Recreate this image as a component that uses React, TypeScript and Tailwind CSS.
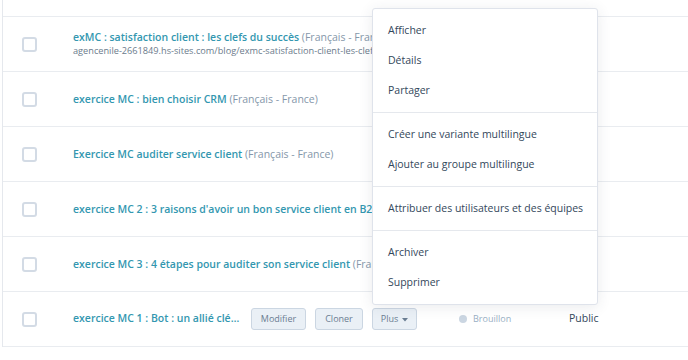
interface IRow {
  title: string;
  lang?: string;
  url?: string;
}

const rows: IRow[] = [
  {
    title: "exMC : satisfaction client : les clefs du succès",
    lang: "(Français - France)",
    url: "agencenile-2661849.hs-sites.com/blog/exmc-satisfaction-client-les-clefs-du-succes",
  },
  { title: "exercice MC : bien choisir CRM", lang: "(Français - France)" },
  { title: "Exercice MC auditer service client", lang: "(Français - France)" },
  { title: "exercice MC 2 : 3 raisons d'avoir un bon service client en B2B", lang: "(Français - France)" },
  { title: "exercice MC 3 : 4 étapes pour auditer son service client", lang: "(Français - France)" },
];

const menuSections = [
  ["Afficher", "Détails", "Partager"],
  ["Créer une variante multilingue", "Ajouter au groupe multilingue"],
  ["Attribuer des utilisateurs et des équipes"],
  ["Archiver", "Supprimer"],
];

const Checkbox = () => (
  <div className="w-[70px] shrink-0 pl-[19px]">
    <div className="w-[15px] h-[15px] border-2 border-[#d3dbe5] rounded-[3px] bg-white" />
  </div>
);

const MoreMenu = () => (
  <div className="absolute left-0 bottom-[calc(100%+3px)] z-10 w-[226px] bg-white border border-[#dfe3eb] rounded-[3px] shadow-[0_2px_14px_rgba(45,62,80,0.1)]">
    {menuSections.map((section, i) => (
      <div key={i} className={`pt-[7px] pb-[6px] ${i > 0 ? "border-t border-[#e5e8ed]" : ""}`}>
        {section.map((item) => (
          <div key={item} className="h-[30px] flex items-center px-[15px] text-[10.5px] text-[#33475b] whitespace-nowrap">
            {item}
          </div>
        ))}
      </div>
    ))}
  </div>
);

const Button = ({ label, width, caret }: { label: string; width: string; caret?: boolean }) => (
  <div className={`${width} h-[22px] flex items-center justify-center gap-[4px] bg-[#eaf0f6] border border-[#cbd6e2] rounded-[3px] text-[9px] text-[#6a7d92]`}>
    {label}
    {caret && (
      <svg width="6" height="4" viewBox="0 0 6 4" className="mt-[1px]">
        <path d="M0 0 L6 0 L3 3.5 Z" fill="#6a7d92" />
      </svg>
    )}
  </div>
);

export default function App() {
  return (
    <div
      className="w-[688px] h-[360px] overflow-hidden bg-white"
      style={{ fontFamily: "'Open Sans', Lato, sans-serif" }}
    >
      <div className="ml-[2px] -mt-[40px] border-l border-[#e5e8ed]">
        {/* partly hidden row above */}
        <div className="h-[57px] flex items-center border-b border-[#e9ecf0]">
          <div className="w-[70px] shrink-0" />
          <div className="flex flex-col whitespace-nowrap leading-[14px]">
            <span className="text-[10.5px] font-semibold text-[#3397b0]">exercice MC</span>
            <span className="text-[9.2px] text-[#6b7b8c]">agencenile-2661849.hs-sites.com/blog/exercice-mc-page-guide-du-blogging-agency</span>
          </div>
        </div>

        {rows.map((row) => (
          <div key={row.title} className="h-[55px] flex items-center border-b border-[#e9ecf0]">
            <Checkbox />
            <div className="flex flex-col whitespace-nowrap leading-[14px]">
              <div className="text-[10.5px]">
                <span className="font-semibold text-[#3397b0]">{row.title}</span>{" "}
                <span className="text-[#8597aa]">{row.lang}</span>
              </div>
              {row.url && <span className="text-[9.2px] text-[#6b7b8c]">{row.url}</span>}
            </div>
          </div>
        ))}

        <div className="h-[55px] flex items-center border-b border-[#e9ecf0]">
          <Checkbox />
          <div className="w-[168px] mr-[10px] truncate text-[10.5px] font-semibold text-[#3397b0]">
            exercice MC 1 : Bot : un allié clé pour votre service client
          </div>
          <div className="w-[205px] flex items-center gap-[9px]">
            <Button label="Modifier" width="w-[55px]" />
            <Button label="Cloner" width="w-[48px]" />
            <div className="relative">
              <MoreMenu />
              <Button label="Plus" width="w-[45px]" caret />
            </div>
          </div>
          <div className="w-[113px] flex items-center gap-[6px] pl-[3px]">
            <div className="w-[8px] h-[8px] rounded-full bg-[#cbd6e2]" />
            <span className="text-[9px] text-[#99afc4]">Brouillon</span>
          </div>
          <span className="text-[10.5px] text-[#33475b]">Public</span>
        </div>
      </div>
    </div>
  );
}
